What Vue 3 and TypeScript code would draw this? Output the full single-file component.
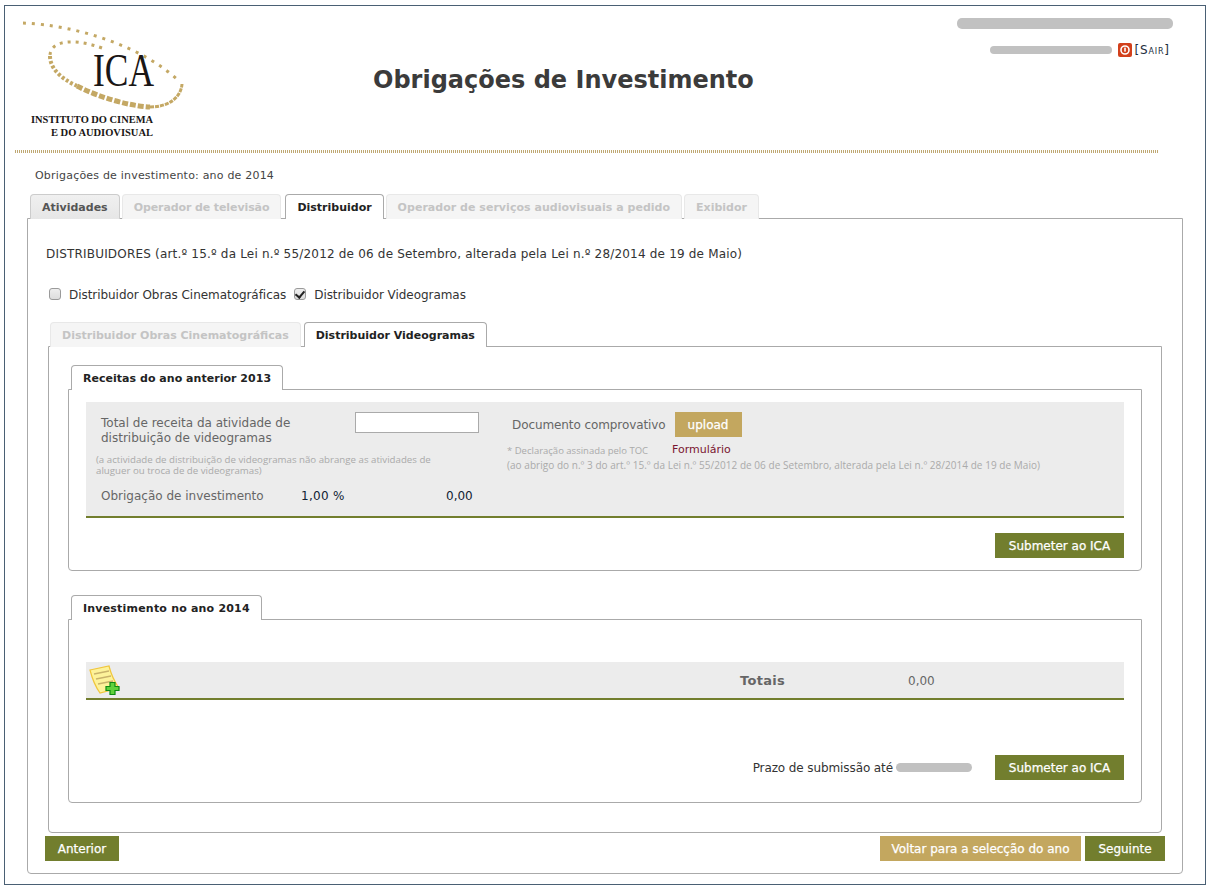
<script setup lang="ts">
import { ref } from 'vue'

const mainTabs = [
  { label: 'Atividades', state: 'normal' },
  { label: 'Operador de televisão', state: 'disabled' },
  { label: 'Distribuidor', state: 'active' },
  { label: 'Operador de serviços audiovisuais a pedido', state: 'disabled' },
  { label: 'Exibidor', state: 'disabled' },
]

const cinema = ref<boolean>(false)
const video = ref<boolean>(true)
const revenue = ref<string>('')
</script>

<template>
  <div class="frame">
    <header class="header">
      <svg class="logo" width="180" height="135" viewBox="0 0 180 135">
        <g transform="translate(3 0)" fill="none" stroke="#c4a864">
          <path d="M8 17 C60 19 128 40 165 76" stroke-width="3" stroke-dasharray="3 6" />
          <path d="M87 42 C60 32 35 34 35 50" stroke-width="3" stroke-dasharray="3 5" />
          <path d="M35 50 C35 62 45 72 62 80" stroke-width="4" stroke-dasharray="3 2" />
          <path d="M62 80 C85 92 115 100 135 101" stroke-width="5" stroke-dasharray="6 2" />
          <path d="M135 101 C153 101 166 92 167 78" stroke-width="3" stroke-dasharray="4 1" />
        </g>
        <text x="81" y="80" class="logo-ica" textLength="61" lengthAdjust="spacingAndGlyphs">ICA</text>
        <text x="19" y="117" class="logo-name" textLength="122" lengthAdjust="spacingAndGlyphs">INSTITUTO DO CINEMA</text>
        <text x="39" y="130" class="logo-name" textLength="102" lengthAdjust="spacingAndGlyphs">E DO AUDIOVISUAL</text>
      </svg>
      <h1 class="title">Obrigações de Investimento</h1>
      <div class="user">
        <div class="pill pill-name"></div>
        <div class="user-row">
          <div class="pill pill-mail"></div>
          <svg class="power" width="14" height="14" viewBox="0 0 14 14">
            <rect width="14" height="14" rx="2" fill="#d2401c" />
            <circle cx="7" cy="7" r="4" fill="none" stroke="#fff" stroke-width="1.6" />
            <rect x="6.2" y="4.6" width="1.6" height="4" fill="#fff" />
          </svg>
          <a class="logout">[Sair]</a>
        </div>
      </div>
    </header>
    <div class="dots"></div>

    <p class="year">Obrigações de investimento: ano de 2014</p>

    <nav class="tabs main-tabs">
      <span v-for="tab in mainTabs" :key="tab.label" class="tab" :class="tab.state">{{ tab.label }}</span>
    </nav>

    <main class="panel">
      <p class="law">DISTRIBUIDORES (art.º 15.º da Lei n.º 55/2012 de 06 de Setembro, alterada pela Lei n.º 28/2014 de 19 de Maio)</p>

      <div class="checks">
        <label><input v-model="cinema" type="checkbox">Distribuidor Obras Cinematográficas</label>
        <label><input v-model="video" type="checkbox">Distribuidor Videogramas</label>
      </div>

      <nav class="tabs sub-tabs">
        <span class="tab disabled">Distribuidor Obras Cinematográficas</span>
        <span class="tab active">Distribuidor Videogramas</span>
      </nav>

      <div class="subpanel">
        <nav class="tabs section-tabs">
          <span class="tab active">Receitas do ano anterior 2013</span>
        </nav>
        <section class="section revenue">
          <div class="grey-box">
            <div class="left">
              <div class="total-row">
                <label class="total-label">Total de receita da atividade de distribuição de videogramas</label>
                <input v-model="revenue" class="total-input" type="text">
              </div>
              <p class="hint hint-left">(a actividade de distribuição de videogramas não abrange as atividades de aluguer ou troca de de videogramas)</p>
              <div class="duty">
                <span class="duty-label">Obrigação de investimento</span>
                <span class="duty-rate">1,00 %</span>
                <span class="duty-value">0,00</span>
              </div>
            </div>
            <div class="right">
              <div class="doc-row">
                <span class="doc-label">Documento comprovativo</span>
                <button class="btn tan upload">upload</button>
              </div>
              <div class="form-row">
                <span class="hint note">* Declaração assinada pelo TOC</span>
                <a class="form-link">Formulário</a>
              </div>
              <p class="hint legal">(ao abrigo do n.º 3 do art.º 15.º da Lei n.º 55/2012 de 06 de Setembro, alterada pela Lei n.º 28/2014 de 19 de Maio)</p>
            </div>
          </div>
          <div class="actions">
            <button class="btn olive submit">Submeter ao ICA</button>
          </div>
        </section>

        <nav class="tabs section-tabs second">
          <span class="tab active">Investimento no ano 2014</span>
        </nav>
        <section class="section investment">
          <div class="totals">
            <svg class="add-note" width="34" height="32" viewBox="0 0 34 32">
              <path d="M2 6 L21 2 C23 10 26 17 31 24 L12 29 C7 22 4 14 2 6Z" fill="#fdf29a" stroke="#f0c63c" stroke-width="1.2" />
              <path d="M6 10 L21 7 M8 15 L23 12 M10 20 L25 17" stroke="#c9b36b" stroke-width="1.5" fill="none" />
              <path d="M22 20 H27 V24 H31 V28 H27 V32 H22 V28 H18 V24 H22Z" transform="translate(0 -1.5)" fill="#5fd13c" stroke="#0d8a12" stroke-width="1.2" />
            </svg>
            <span class="totals-label">Totais</span>
            <span class="totals-value">0,00</span>
          </div>
          <div class="actions deadline">
            <span class="deadline-text">Prazo de submissão até</span>
            <div class="pill pill-date"></div>
            <button class="btn olive submit">Submeter ao ICA</button>
          </div>
        </section>
      </div>

      <footer class="footer">
        <button class="btn olive prev">Anterior</button>
        <div class="footer-right">
          <button class="btn tan back">Voltar para a selecção do ano</button>
          <button class="btn olive next">Seguinte</button>
        </div>
      </footer>
    </main>
  </div>
</template>

<style>
html, body {
  background: #fff;
}
</style>

<style scoped>
.frame {
  box-sizing: border-box;
  width: 1202px;
  height: 880px;
  margin: 5px 0 0 4px;
  border: 1px solid #4a6074;
  font-family: "DejaVu Sans", Verdana, sans-serif;
  font-size: 12px;
  color: #333;
}

.header {
  display: flex;
  height: 144px;
  padding-left: 7px;
}

.logo {
  flex: none;
}

.logo-ica {
  font-family: "Liberation Serif", serif;
  font-size: 46px;
  fill: #1a1616;
}

.logo-name {
  font-family: "Liberation Serif", serif;
  font-size: 10px;
  font-weight: bold;
  fill: #1a1616;
}

.title {
  margin: 57px 0 0 181px;
  font-size: 24px;
  line-height: 34px;
  font-weight: bold;
  color: #3b3b3b;
  white-space: nowrap;
}

.user {
  display: flex;
  flex-direction: column;
  align-items: flex-end;
  width: 419px;
  padding-top: 12px;
}

.pill {
  background: #c1c1c1;
  border-radius: 5px;
}

.pill-name {
  width: 216px;
  height: 11px;
}

.user-row {
  display: flex;
  align-items: center;
  margin-top: 14px;
  margin-right: 3px;
}

.pill-mail {
  width: 122px;
  height: 8px;
  margin-right: 6px;
}

.logout {
  margin-left: 3px;
  font-size: 12px;
  font-variant: small-caps;
  color: #1d2d3d;
  letter-spacing: 0.8px;
}

.dots {
  width: 1143px;
  height: 3px;
  margin-left: 10px;
  background: repeating-linear-gradient(90deg, #bfa873 0 1px, #fff 1px 2px);
}

.year {
  margin: 16px 0 0 30px;
  font-size: 11px;
  line-height: 14px;
  letter-spacing: 0.2px;
  color: #444;
}

.tabs {
  display: flex;
}

.main-tabs {
  gap: 2px;
  margin: 11px 0 -1px 25px;
  position: relative;
}

.main-tabs .tab:nth-child(2) {
  letter-spacing: -0.1px;
}

.main-tabs .tab:nth-child(4) {
  letter-spacing: 0.03px;
}

.tab {
  box-sizing: border-box;
  height: 25px;
  padding: 0 11px;
  border: 1px solid #ddd;
  border-bottom: none;
  border-radius: 4px 4px 0 0;
  font-size: 11px;
  line-height: 25px;
  font-weight: bold;
  white-space: nowrap;
}

.tab.normal {
  background: linear-gradient(#f0f0f0, #e6e6e6);
  color: #555;
  border-color: #ccc;
}

.tab.disabled {
  background: #f5f5f5;
  color: #c4c4c4;
  border-color: #e8e8e8;
}

.tab.active {
  position: relative;
  z-index: 1;
  background: #fff;
  color: #222;
  border-color: #aaa;
}

.main-tabs .tab.active {
  margin-left: 2px;
}

.panel {
  box-sizing: border-box;
  width: 1156px;
  height: 656px;
  margin-left: 22px;
  padding: 28px 0 0 18px;
  border: 1px solid #aaa;
  border-radius: 0 0 4px 4px;
}

.law {
  margin: 0;
  line-height: 14px;
  letter-spacing: 0.19px;
  color: #333;
}

.checks {
  display: flex;
  gap: 8px;
  margin-top: 27px;
  margin-left: 3px;
  line-height: 14px;
  letter-spacing: -0.05px;
}

.checks label {
  display: flex;
  align-items: center;
  color: #333;
}

.checks input {
  appearance: none;
  position: relative;
  box-sizing: border-box;
  width: 12px;
  height: 12px;
  margin: 0 8px 2px 0;
  border: 1px solid #9a9a9a;
  border-radius: 3px;
  background: linear-gradient(#eee, #ddd);
}

.checks input:checked::after {
  content: '';
  position: absolute;
  left: 2px;
  top: 0;
  width: 4px;
  height: 7px;
  border: solid #222;
  border-width: 0 2px 2px 0;
  transform: rotate(40deg);
}

.sub-tabs {
  gap: 3px;
  margin: 20px 0 -1px 4px;
  position: relative;
}

.subpanel {
  box-sizing: border-box;
  width: 1114px;
  height: 487px;
  margin-left: 2px;
  padding: 18px 0 0 19px;
  border: 1px solid #aaa;
  border-radius: 0 0 4px 4px;
}

.section-tabs {
  margin: 0 0 -1px 3px;
  position: relative;
}

.section-tabs.second {
  margin-top: 24px;
}

.section-tabs .tab {
  letter-spacing: 0.03px;
}

.section-tabs.second .tab {
  letter-spacing: 0.2px;
}

.section {
  box-sizing: border-box;
  width: 1074px;
  padding: 12px 17px 0;
  border: 1px solid #aaa;
  border-radius: 0 0 4px 4px;
}

.revenue {
  height: 182px;
}

.investment {
  height: 184px;
  padding-top: 42px;
}

.grey-box {
  display: flex;
  box-sizing: border-box;
  height: 116px;
  background: #ececec;
  border-bottom: 2px solid #727e2e;
}

.left {
  width: 383px;
  flex: none;
  padding: 10px 0 0 10px;
}

.total-row {
  display: flex;
  justify-content: space-between;
  align-items: flex-start;
  padding-left: 5px;
}

.total-label {
  width: 215px;
  margin-top: 4px;
  line-height: 15px;
  color: #666;
}

.total-input {
  box-sizing: border-box;
  width: 124px;
  height: 21px;
  margin: 0;
  border: 1px solid #aaa;
  background: #fff;
}

.hint {
  margin: 0;
  font-family: "Open Sans", sans-serif;
  font-size: 10px;
  line-height: 11px;
  color: #aaa;
}

.hint-left {
  width: 345px;
  margin-top: 8px;
  font-size: 9.7px;
}

.note {
  font-size: 9.5px;
}

.duty {
  display: flex;
  margin-top: 13px;
  padding-left: 5px;
  line-height: 15px;
}

.duty-label {
  width: 200px;
  color: #666;
}

.duty-rate {
  width: 145px;
  letter-spacing: 0.3px;
  color: #123;
}

.duty-value {
  color: #123;
}

.right {
  padding: 10px 0 0 33px;
}

.doc-row {
  display: flex;
  align-items: center;
  gap: 9px;
}

.doc-label {
  letter-spacing: -0.09px;
  color: #666;
}

.btn {
  display: block;
  height: 25px;
  margin: 0;
  padding: 0;
  border: none;
  font-family: inherit;
  font-size: 12px;
  color: #fff;
  text-align: center;
  -webkit-text-stroke: 0.25px #fff;
}

.olive {
  background: #727e2e;
}

.tan {
  background: #c3a75f;
}

.upload {
  width: 67px;
}

.form-row {
  display: flex;
  align-items: center;
  gap: 24px;
  margin-top: 6px;
  margin-left: -5px;
  line-height: 14px;
}

.form-link {
  font-size: 11px;
  color: #7a1530;
}

.legal {
  margin: 3px 0 0 -5px;
  white-space: nowrap;
  letter-spacing: 0.04px;
}

.actions {
  display: flex;
  justify-content: flex-end;
  margin-top: 15px;
}

.submit {
  width: 129px;
}

.totals {
  display: flex;
  align-items: center;
  box-sizing: border-box;
  height: 38px;
  background: #ececec;
  border-bottom: 2px solid #727e2e;
  padding-left: 2px;
}

.add-note {
  flex: none;
}

.totals-label {
  width: 168px;
  margin: 1px 0 0 618px;
  font-size: 13px;
  font-weight: bold;
  letter-spacing: 0.3px;
  color: #666;
}

.totals-value {
  margin-top: 1px;
  color: #666;
}

.deadline {
  align-items: center;
  margin-top: 55px;
}

.deadline-text {
  letter-spacing: -0.1px;
  color: #333;
}

.pill-date {
  width: 76px;
  height: 9px;
  margin: 0 23px 0 3px;
}

.footer {
  display: flex;
  justify-content: space-between;
  width: 1120px;
  margin: 3px 0 0 -1px;
}

.footer-right {
  display: flex;
  gap: 4px;
}

.prev {
  width: 74px;
}

.back {
  width: 201px;
}

.next {
  width: 80px;
}
</style>
